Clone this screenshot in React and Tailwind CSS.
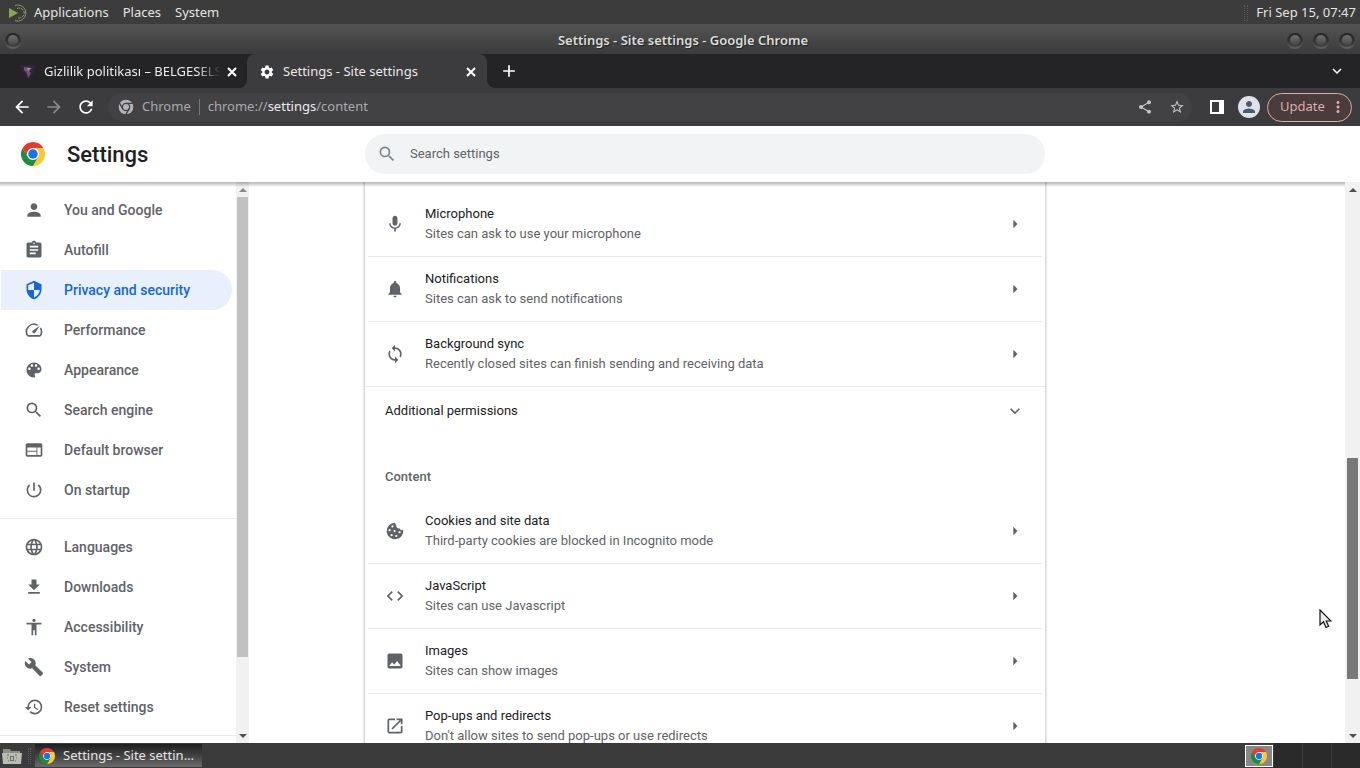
import {
  MdAccessibility, MdAdd, MdArrowBack, MdArrowForward, MdArrowRight, MdAssignment, MdBuild,
  MdCode, MdExpandMore, MdHistory, MdImage, MdLanguage, MdMic, MdMoreVert, MdNotifications,
  MdOpenInNew, MdPerson, MdPowerSettingsNew, MdRefresh, MdSearch, MdSecurity, MdSettings,
  MdShare, MdSpeed, MdStarBorder, MdSync, MdWeb,
} from 'react-icons/md'

function DownloadIcon({ className }) {
  return (
    <svg viewBox="0 0 24 24" fill="currentColor" className={className}>
      <path d="M19 9h-4V3H9v6H5l7 7 7-7zM5 18v2h14v-2H5z" />
    </svg>
  )
}

function PaletteIcon({ className }) {
  return (
    <svg viewBox="0 0 24 24" fill="currentColor" className={className}>
      <path d="M12 3c-4.970 0-9 4.030-9 9s4.030 9 9 9c.83 0 1.500-.67 1.500-1.500 0-.39-.15-.74-.39-1.010-.23-.26-.38-.61-.38-.99 0-.83.67-1.500 1.500-1.500H16c2.760 0 5-2.240 5-5 0-4.420-4.030-8-9-8zm-5.500 9c-.83 0-1.500-.67-1.500-1.500S5.670 9 6.500 9 8 9.670 8 10.500 7.330 12 6.500 12zm3-4C8.670 8 8 7.330 8 6.500S8.670 5 9.500 5s1.500.67 1.500 1.500S10.330 8 9.500 8zm5 0c-.83 0-1.500-.67-1.500-1.500S13.670 5 14.500 5s1.500.67 1.500 1.500S15.330 8 14.500 8zm3 4c-.83 0-1.500-.67-1.500-1.500S16.670 9 17.500 9s1.500.67 1.500 1.500-.67 1.500-1.500 1.500z" />
    </svg>
  )
}

function CookieIcon({ className }) {
  return (
    <svg viewBox="0 0 24 24" className={className}>
      <path fill="currentColor" d="M12 2a10 10 0 1 0 9.900 8.600c-.4.300-.9.400-1.400.400-1.300 0-2.400-.9-2.700-2.100-.3.100-.6.100-.8.100a3.500 3.500 0 0 1-3.400-4.300A3 3 0 0 1 12 2z" />
      <g fill="#fff">
        <circle cx="9" cy="6.500" r="1.300" />
        <circle cx="5.500" cy="11" r="1.300" />
        <circle cx="11.500" cy="12" r="1.300" />
        <circle cx="17.500" cy="13.500" r="1.300" />
        <circle cx="8" cy="17" r="1.300" />
        <circle cx="13.500" cy="18" r="1.300" />
      </g>
    </svg>
  )
}

const menu = [
  { label: 'You and Google', icon: MdPerson },
  { label: 'Autofill', icon: MdAssignment },
  { label: 'Privacy and security', icon: MdSecurity, active: true },
  { label: 'Performance', icon: MdSpeed },
  { label: 'Appearance', icon: PaletteIcon },
  { label: 'Search engine', icon: MdSearch },
  { label: 'Default browser', icon: MdWeb },
  { label: 'On startup', icon: MdPowerSettingsNew },
]

const advanced = [
  { label: 'Languages', icon: MdLanguage },
  { label: 'Downloads', icon: DownloadIcon },
  { label: 'Accessibility', icon: MdAccessibility },
  { label: 'System', icon: MdBuild },
  { label: 'Reset settings', icon: MdHistory },
]

const permissions = [
  { title: 'Microphone', text: 'Sites can ask to use your microphone', icon: MdMic },
  { title: 'Notifications', text: 'Sites can ask to send notifications', icon: MdNotifications },
  { title: 'Background sync', text: 'Recently closed sites can finish sending and receiving data', icon: MdSync },
]

const content = [
  { title: 'Cookies and site data', text: 'Third-party cookies are blocked in Incognito mode', icon: CookieIcon },
  { title: 'JavaScript', text: 'Sites can use Javascript', icon: MdCode },
  { title: 'Images', text: 'Sites can show images', icon: MdImage },
  { title: 'Pop-ups and redirects', text: "Don't allow sites to send pop-ups or use redirects", icon: MdOpenInNew },
]

function ChromeLogo({ className }) {
  return (
    <svg viewBox="0 0 48 48" className={className}>
      <circle cx="24" cy="24" r="12" fill="#fff" />
      <path fill="#e33b2e" d="M24 12H44.78A24 24 0 0 0 3.217 12.003L13.608 30l.01-.002A11.985 11.985 0 0 1 24 12z" />
      <path fill="#fcc934" d="M34.391 30.003 24 48A23.994 23.994 0 0 0 44.78 12.003H24l-.003.01A11.985 11.985 0 0 1 34.391 30.003z" />
      <path fill="#1e8e3e" d="M13.609 30.003 3.218 12.006A23.994 23.994 0 0 0 24.003 48L34.393 30.003l-.007-.007a11.985 11.985 0 0 1-20.777.007z" />
      <circle cx="24" cy="24" r="9.5" fill="#1a73e8" />
    </svg>
  )
}

function ChromeMono({ className }) {
  return (
    <svg viewBox="0 0 48 48" className={className}>
      <circle cx="24" cy="24" r="22" fill="#b4b5b8" />
      <g fill="none" stroke="#424245" strokeWidth="4">
        <circle cx="24" cy="24" r="11" />
        <path d="M24 13H45M14.470 29.500L4 11.300M33.530 29.500L23 47.700" />
      </g>
    </svg>
  )
}

function TopPanel() {
  return (
    <div className="flex h-6 shrink-0 items-center bg-[#3c3c3d] pl-2 pr-1 pt-px text-[13px] text-[#e4e4e4]">
      <svg viewBox="0 0 20 20" className="mr-[6px] size-5 shrink-0" fill="none">
        <path d="M1 5l9 5-9 5z" fill="#87a752" />
        <path d="M7 2.5a8 8 0 1 1 0 15" stroke="#8a9a6a" strokeWidth="1" />
        <path d="M9 5.5a5 5 0 1 1 0 9" stroke="#8a9a6a" strokeWidth="1" strokeDasharray="3 1" />
      </svg>
      <nav className="flex flex-1 gap-[14px]">
        <button>Applications</button>
        <button>Places</button>
        <button>System</button>
      </nav>
      <span className="mr-2 h-4 w-1 border-x border-dotted border-[#5a5a5c]" />
      <span>Fri Sep 15, 07:47</span>
    </div>
  )
}

function WindowButton({ label }) {
  return (
    <button aria-label={label} className="flex size-4 items-center justify-center rounded-full border-b-2 border-[#5c5c5c] bg-linear-to-b from-[#232323] to-[#444]">
      <span className="size-[10px] rounded-full bg-linear-to-b from-[#707070] to-[#484848]" />
    </button>
  )
}

function TitleBar() {
  return (
    <div className="flex h-[30px] shrink-0 items-center bg-linear-to-b from-[#545454] to-[#3b3b3b] pl-[5px] pr-[5px] pt-[3px]">
      <WindowButton label="Window menu" />
      <h1 className="flex-1 pl-[58px] text-center text-[13px] font-semibold text-[#dcdcdc] [text-shadow:1px_1px_1px_#222]">
        Settings - Site settings - Google Chrome
      </h1>
      <div className="flex gap-[10px]">
        <WindowButton label="Minimize" />
        <WindowButton label="Maximize" />
        <WindowButton label="Close" />
      </div>
    </div>
  )
}

function CloseTab() {
  return (
    <button aria-label="Close tab" className="flex size-4 shrink-0 items-center justify-center">
      <svg viewBox="0 0 16 16" className="size-4" stroke="#fff" strokeWidth="2">
        <path d="M4 4l8 8M12 4l-8 8" />
      </svg>
    </button>
  )
}

function TabStrip() {
  return (
    <div className="flex h-[34px] shrink-0 bg-[#3c3c3e] text-[13px] text-[#eaeaea]">
      <div className="flex w-[247px] items-center rounded-br-lg bg-[#242426] pl-5 pr-[7px] pt-px">
        <svg viewBox="0 0 16 16" className="mr-2 size-4 shrink-0">
          <path d="M0 1h16l-2 7-6 8-5-8z" fill="#33233b" />
          <path d="M4 3l8 1-3 3 2 2-3 5-1-5-3-3z" fill="#6f5575" />
          <path d="M7 4l4 0-3 3z" fill="#a58ba3" />
        </svg>
        <button className="flex-1 whitespace-nowrap text-left mask-r-from-85% mask-r-to-98%">
          Gizlilik politikası – BELGESELS
        </button>
        <CloseTab />
      </div>
      <div className="w-60 bg-[#242426]">
        <div className="flex h-full items-center rounded-t-lg bg-[#3c3c3e] pl-3 pr-2 pt-px">
          <MdSettings className="mr-2 size-4 shrink-0 text-white" />
          <button className="flex-1 text-left">Settings - Site settings</button>
          <CloseTab />
        </div>
      </div>
      <div className="flex flex-1 items-center justify-between rounded-bl-lg bg-[#242426] pl-3 pr-[14px]">
        <button aria-label="New tab"><MdAdd className="size-5 text-white" /></button>
        <button aria-label="Search tabs"><MdExpandMore className="size-[18px] text-white" /></button>
      </div>
    </div>
  )
}

function Toolbar() {
  return (
    <div className="flex h-[38px] shrink-0 items-center bg-[#3c3c3e] pl-3 pr-2 text-[13px]">
      <div className="flex gap-3 text-white">
        <button aria-label="Back"><MdArrowBack className="size-5" /></button>
        <button aria-label="Forward"><MdArrowForward className="size-5 text-[#88898b]" /></button>
        <button aria-label="Reload"><MdRefresh className="size-5" /></button>
      </div>
      <div className="ml-3 flex h-7 flex-1 items-center rounded-full bg-[#424245] pl-[10px] pr-[7px] text-[#a9aaad]">
        <ChromeMono className="mr-2 size-4" />
        <span>Chrome</span>
        <span className="mx-2 h-4 w-px bg-[#77787a]" />
        <div role="textbox" aria-label="Address" className="flex-1">
          chrome://<span className="text-[#ececec]">settings</span>/content
        </div>
        <button aria-label="Share" className="mr-4"><MdShare className="size-4 text-[#c4c4c6]" /></button>
        <button aria-label="Bookmark"><MdStarBorder className="size-4 text-[#c4c4c6]" /></button>
      </div>
      <button aria-label="Side panel" className="ml-[18px] flex h-[14px] w-[14px] border-2 border-r-[5px] border-white" />
      <button aria-label="Profile" className="ml-[14px] flex size-[22px] items-center justify-center rounded-full bg-[#dee3ea] text-[#4c5a6b]">
        <MdPerson className="size-[18px]" />
      </button>
      <button className="ml-[7px] flex h-[29px] w-[85px] items-center rounded-full border border-[#d8b0a9] bg-[#4a3b3c] pl-3 text-[#d8b0a9]">
        <span className="flex-1 text-left">Update</span>
        <MdMoreVert className="mr-1 size-[18px]" />
      </button>
    </div>
  )
}

function PageHeader() {
  return (
    <header className="grid h-14 shrink-0 grid-cols-[250px_23fr_680px_60fr] items-center bg-white pr-[15px]">
      <div className="flex items-center pl-[21px]">
        <ChromeLogo className="mr-[22px] size-6" />
        <h2 className="text-[22px] font-medium text-[#202124]">Settings</h2>
      </div>
      <label className="col-start-3 flex h-10 items-center rounded-full bg-[#f1f3f4] pl-3">
        <MdSearch className="mr-[13px] size-5 text-[#80868b]" />
        <input
          type="search"
          aria-label="Search settings"
          placeholder="Search settings"
          className="flex-1 bg-transparent text-[13px] outline-none placeholder:text-[#5f6368]"
        />
      </label>
    </header>
  )
}

function MenuItem({ item }) {
  const Icon = item.icon
  return (
    <li>
      <a
        href="#"
        aria-current={item.active ? 'page' : undefined}
        className={`ml-px mr-1 flex h-10 items-center gap-5 rounded-r-full pl-[23px] text-sm font-medium
          ${item.active ? 'bg-[#e8f0fe] text-[#1967d2]' : 'text-[#5f6368]'}`}
      >
        <Icon className="size-5" />
        {item.label}
      </a>
    </li>
  )
}

function Arrow({ up, className }) {
  return (
    <svg viewBox="0 0 8 4" className={`h-1 w-2 ${className}`} fill="currentColor">
      <path d={up ? 'M0 4l4-4 4 4z' : 'M0 0l4 4 4-4z'} />
    </svg>
  )
}

function Sidebar() {
  return (
    <aside className="flex w-[250px] shrink-0">
      <nav className="flex-1 overflow-hidden pt-2">
        <ul>{menu.map(item => <MenuItem key={item.label} item={item} />)}</ul>
        <hr className="my-2 border-[#e8eaed]" />
        <ul>{advanced.map(item => <MenuItem key={item.label} item={item} />)}</ul>
        <hr className="my-2 border-[#e8eaed]" />
      </nav>
      <div className="mr-px flex w-[13px] flex-col items-center bg-[#f1f1f1]">
        <div className="flex h-[15px] items-center"><Arrow up className="text-[#8a8a8a]" /></div>
        <div className="w-[11px] flex-[460] bg-[#c1c1c1]" />
        <div className="flex-[71]" />
        <div className="flex h-[15px] items-center"><Arrow className="text-[#505050]" /></div>
      </div>
    </aside>
  )
}

function SettingRow({ row }) {
  const Icon = row.icon
  return (
    <li>
      <button className="flex h-16 w-full items-center px-[17px] text-left">
        <Icon className="mr-5 size-5 shrink-0 text-[#5f6368]" />
        <span className="flex-1 leading-5">
          <span className="block text-[#202124]">{row.title}</span>
          <span className="block text-[#5f6368]">{row.text}</span>
        </span>
        <MdArrowRight className="size-5 text-[#5f6368]" />
      </button>
    </li>
  )
}

function SiteSettings() {
  return (
    <main className="grid flex-1 grid-cols-[23fr_680px_60fr] overflow-hidden">
      <section className="col-start-2 pt-[10px] text-[13px] shadow-[0_0_2px_1px_rgba(60,64,67,0.3)]">
        <ul className="mx-[3px] divide-y divide-[#e8eaed]">
          {permissions.map(row => <SettingRow key={row.title} row={row} />)}
        </ul>
        <button className="flex h-[49px] w-full items-center justify-between border-t border-[#e8eaed] px-5 text-[#202124]">
          Additional permissions
          <MdExpandMore className="size-5 text-[#5f6368]" />
        </button>
        <h3 className="px-5 pb-3 pt-8 font-medium leading-5 text-[#5f6368]">Content</h3>
        <ul className="mx-[3px] divide-y divide-[#e8eaed]">
          {content.map(row => <SettingRow key={row.title} row={row} />)}
        </ul>
      </section>
    </main>
  )
}

function PageScrollbar() {
  return (
    <div className="relative z-20 flex w-[15px] shrink-0 flex-col items-center bg-[#f1f1f1]">
      <div className="flex h-[15px] items-center"><Arrow up className="text-[#505050]" /></div>
      <div className="flex-[261]" />
      <div className="w-[11px] flex-[221] bg-[#787878]" />
      <div className="flex-[49]" />
      <div className="flex h-[15px] items-center"><Arrow className="text-[#505050]" /></div>
    </div>
  )
}

function BottomPanel() {
  return (
    <div className="flex h-[25px] shrink-0 items-center bg-[#3b3b3c] pl-[2px] text-[13px] text-[#e4e4e4]">
      <button aria-label="Show files">
        <svg viewBox="0 0 20 18" className="h-[18px] w-5">
          <path d="M1 2h7l1 2h9v13H1z" fill="#8d9087" />
          <path d="M0 6h20l-1 11H1z" fill="#b9bcb0" />
          <path d="M5 8h2M13 8h2M5 11h1M14 11h1M6 14h1M13 14h1" stroke="#6b6d66" strokeWidth="1" />
          <rect x="8.500" y="9.500" width="3" height="4" fill="none" stroke="#6b6d66" />
        </svg>
      </button>
      <span className="ml-[6px] mr-1 h-4 w-[3px] border-x border-dotted border-[#5a5a5c]" />
      <button className="flex h-[23px] w-[167px] items-center bg-linear-to-b from-[#1f1f20] to-[#6a6a6b] pl-1 pt-px">
        <ChromeLogo className="mr-2 size-4 shrink-0" />
        <span className="whitespace-nowrap">Settings - Site settin…</span>
      </button>
      <div className="ml-auto flex h-full items-center gap-px bg-[#3b3b3c]">
        <button aria-label="Workspace 1" className="flex h-[22px] w-7 items-center justify-center border border-white bg-[#888]">
          <ChromeLogo className="size-4" />
        </button>
        <button aria-label="Workspace 2" className="h-full w-7 bg-[#2a2a2b]" />
        <button aria-label="Workspace 3" className="h-full w-7 bg-[#2a2a2b]" />
        <button aria-label="Workspace 4" className="h-full w-7 bg-[#2a2a2b]" />
      </div>
    </div>
  )
}

export default function App() {
  return (
    <div className="relative flex h-screen flex-col overflow-hidden font-['Noto_Sans',sans-serif]">
      <TopPanel />
      <TitleBar />
      <TabStrip />
      <Toolbar />
      <div className="flex min-h-0 flex-1 flex-col bg-white font-[Roboto,sans-serif]">
        <PageHeader />
        <div className="relative flex min-h-0 flex-1">
          <Sidebar />
          <SiteSettings />
          <PageScrollbar />
          <div className="pointer-events-none absolute inset-x-0 top-0 z-10 h-[5px] bg-linear-to-b from-black/30 to-transparent" />
        </div>
      </div>
      <BottomPanel />
      <svg viewBox="0 0 13 20" className="pointer-events-none absolute right-[28px] top-[609px] z-30 h-5 w-[13px]">
        <path d="M1 1v15l3.500-3.200L7 18.500l2.600-1.200-2.400-5.300H12z" fill="#eee" stroke="#111" strokeWidth="1.200" />
      </svg>
    </div>
  )
}
